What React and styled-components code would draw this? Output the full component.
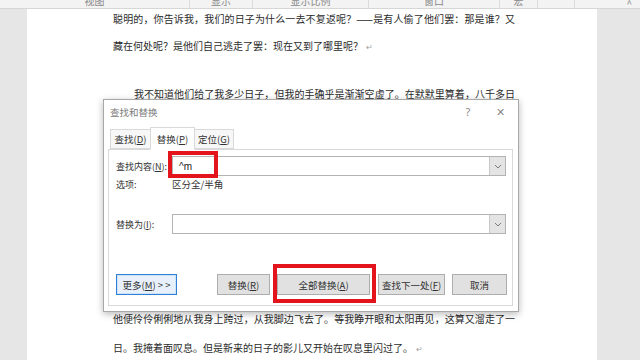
import styled, { createGlobalStyle } from "styled-components";

const GlobalStyle = createGlobalStyle`
  html, body {
    margin: 0;
    padding: 0;
    background: #e6e6e6;
  }
  body {
    font-family: "Noto Sans CJK SC", "Noto Sans", sans-serif;
  }
`;

const Screen = styled.div`
  width: 640px;
  height: 360px;
  overflow: hidden;
  display: flex;
  flex-direction: column;
  background: #e6e6e6;
`;

const Ribbon = styled.div`
  height: 8px;
  flex-shrink: 0;
  display: flex;
  overflow: hidden;
  background: #f3f3f3;
  border-bottom: 1px solid #d6d6d6;
`;

const RibbonCell = styled.div`
  width: ${(p) => p.w}px;
  flex-shrink: 0;
  display: flex;
  justify-content: ${(p) => (p.right ? "flex-end" : "center")};
  padding-right: ${(p) => (p.right ? "8px" : "0")};
  box-sizing: border-box;
  border-right: ${(p) => (p.last ? "none" : "1px solid #dcdcdc")};
  font-size: 10px;
  line-height: 10px;
  color: #8a8a8a;
  margin-top: -4px;
`;

const Workspace = styled.div`
  flex: 1;
  display: flex;
`;

const Page = styled.div`
  position: relative;
  margin-left: 27px;
  width: 570px;
  background: #fff;
  padding: 3px 0 0 86px;
  box-sizing: border-box;
`;

const Line = styled.p`
  margin: ${(p) => p.gap || 0}px 0 0 ${(p) => p.indent || 0}px;
  width: ${(p) => (p.full ? `${402 - (p.indent || 0)}px` : "auto")};
  font-size: 10px;
  line-height: 14px;
  color: #2b2b2b;
  white-space: nowrap;
  text-align: left;
  text-align-last: ${(p) => (p.full ? "justify" : "auto")};
`;

const Mark = styled.span`
  color: #a0a0a0;
  font-size: 8px;
  margin-left: 3px;
`;

const Dialog = styled.div`
  position: absolute;
  left: 76px;
  top: 90px;
  width: 416px;
  height: 213px;
  box-sizing: border-box;
  background: #fff;
  border: 1px solid #a8a8a8;
  box-shadow: 0 2px 7px rgba(0, 0, 0, 0.28);
  display: flex;
  flex-direction: column;
  z-index: 2;
  font-size: 9.5px;
  color: #333;
`;

const TitleBar = styled.div`
  height: 23px;
  display: flex;
  align-items: center;
  padding: 0 1px 0 6px;
`;

const Title = styled.div`
  flex: 1;
  font-size: 9.5px;
  color: #7a7a7a;
`;

const TitleButton = styled.div`
  width: ${(p) => p.w}px;
  height: 23px;
  display: flex;
  align-items: center;
  justify-content: center;
  font-size: 11px;
  color: #8a8a8a;
  font-family: "Noto Sans", sans-serif;
`;

const TabsRow = styled.div`
  display: flex;
  align-items: flex-end;
  height: 22px;
  padding-left: 6px;
  margin-top: 4px;
  position: relative;
  z-index: 1;
`;

const Tab = styled.div`
  width: ${(p) => p.w}px;
  height: ${(p) => (p.active ? 23 : 20)}px;
  box-sizing: border-box;
  display: flex;
  align-items: center;
  justify-content: center;
  color: #333;
  background: ${(p) => (p.active ? "#fff" : "#f7f7f7")};
  border: 1px solid #d9d9d9;
  border-bottom: ${(p) => (p.active ? "1px solid #fff" : "1px solid #d9d9d9")};
  margin-bottom: ${(p) => (p.active ? "-1px" : "0")};
  margin-left: ${(p) => (p.active ? "-1px" : "0")};
  margin-right: ${(p) => (p.active ? "-1px" : "0")};
`;

const Panel = styled.div`
  flex: 1;
  margin: 0 5px 5px 4px;
  border: 1px solid #d9d9d9;
  padding: 6px 5px 0 7px;
  display: flex;
  flex-direction: column;
`;

const FieldRow = styled.div`
  display: flex;
  align-items: center;
  height: ${(p) => p.h || 20}px;
  margin-top: ${(p) => p.gap || 0}px;
`;

const Label = styled.div`
  width: 56px;
  flex-shrink: 0;
  font-size: 9px;
  white-space: nowrap;
`;

const ComboBox = styled.div`
  position: relative;
  flex: 1;
  height: 20px;
  margin-right: 1px;
  box-sizing: border-box;
  border: 1px solid #b3b3b3;
  display: flex;
  align-items: center;
  background: #fff;
`;

const ComboText = styled.div`
  flex: 1;
  padding-left: 6px;
  font-size: 10px;
  font-family: "Liberation Sans", sans-serif;
  color: #222;
`;

const DropButton = styled.div`
  width: 15px;
  height: 100%;
  background: #e4e4e4;
  border-left: 1px solid #c8c8c8;
  display: flex;
  align-items: center;
  justify-content: center;
`;

const Highlight = styled.div`
  position: absolute;
  left: ${(p) => p.x}px;
  top: ${(p) => p.y}px;
  width: ${(p) => p.w}px;
  height: ${(p) => p.h}px;
  box-sizing: border-box;
  border: 4px solid #e3141b;
  pointer-events: none;
`;

const ButtonRow = styled.div`
  display: flex;
  height: 21px;
  margin-top: 40px;
`;

const ButtonGroup = styled.div`
  display: flex;
  gap: ${(p) => p.gap}px;
  margin-left: auto;
`;

const Button = styled.div`
  position: relative;
  width: ${(p) => p.w}px;
  height: 21px;
  box-sizing: border-box;
  margin-left: ${(p) => p.ml || 0}px;
  display: flex;
  align-items: center;
  justify-content: center;
  white-space: nowrap;
  background: ${(p) => (p.primary ? "#e8f1fb" : "#e1e1e1")};
  border: 1px solid ${(p) => (p.primary ? "#2f7fd6" : "#adadad")};
  box-shadow: ${(p) => (p.primary ? "inset 0 0 0 1px #cfe3f7" : "none")};
`;

function Chevron() {
  return (
    <svg width="8" height="5" viewBox="0 0 8 5">
      <path d="M1 1 L4 4 L7 1" fill="none" stroke="#7a7a7a" strokeWidth="1" />
    </svg>
  );
}

const ribbon = [
  { w: 190, label: "视图" },
  { w: 63, label: "显示" },
  { w: 116, label: "显示比例" },
  { w: 131, label: "窗口" },
  { w: 38, label: "宏" },
  { w: 37, label: "" },
];

export default function App() {
  return (
    <Screen>
      <GlobalStyle />
      <Ribbon>
        {ribbon.map((c, i) => (
          <RibbonCell key={i} w={c.w}>
            {c.label}
          </RibbonCell>
        ))}
        <RibbonCell w={65} right last>
          <span style={{ marginTop: 3 }}>^</span>
        </RibbonCell>
      </Ribbon>
      <Workspace>
        <Page>
          <Line full>
            聪明的，你告诉我，我们的日子为什么一去不复返呢？——是有人偷了他们罢：那是谁？又
          </Line>
          <Line gap={13}>
            藏在何处呢？是他们自己逃走了罢：现在又到了哪里呢？<Mark>↵</Mark>
          </Line>
          <Line gap={33} indent={21} full>
            我不知道他们给了我多少日子，但我的手确乎是渐渐空虚了。在默默里算着，八千多日
          </Line>
          <Line gap={211} full>
            他便伶伶俐俐地从我身上跨过，从我脚边飞去了。等我睁开眼和太阳再见，这算又溜走了一
          </Line>
          <Line gap={15}>
            日。我掩着面叹息。但是新来的日子的影儿又开始在叹息里闪过了。<Mark>↵</Mark>
          </Line>

          <Dialog>
            <TitleBar>
              <Title>查找和替换</Title>
              <TitleButton w={30}>?</TitleButton>
              <TitleButton w={34}>✕</TitleButton>
            </TitleBar>
            <TabsRow>
              <Tab w={41}>
                查找(<u>D</u>)
              </Tab>
              <Tab w={45} active>
                替换(<u>P</u>)
              </Tab>
              <Tab w={40}>
                定位(<u>G</u>)
              </Tab>
            </TabsRow>
            <Panel>
              <FieldRow>
                <Label>
                  查找内容(<u>N</u>):
                </Label>
                <ComboBox>
                  <ComboText>^m</ComboText>
                  <DropButton>
                    <Chevron />
                  </DropButton>
                  <Highlight x={-5} y={-6} w={50} h={27} />
                </ComboBox>
              </FieldRow>
              <FieldRow h={16}>
                <Label>选项:</Label>
                <div>区分全/半角</div>
              </FieldRow>
              <FieldRow gap={22}>
                <Label>
                  替换为(<u>I</u>):
                </Label>
                <ComboBox>
                  <ComboText />
                  <DropButton>
                    <Chevron />
                  </DropButton>
                </ComboBox>
              </FieldRow>
              <ButtonRow>
                <Button w={61} primary>
                  更多(<u>M</u>)&nbsp;&gt;&nbsp;&gt;
                </Button>
                <ButtonGroup gap={7}>
                  <Button w={53}>
                    替换(<u>R</u>)
                  </Button>
                  <Button w={93}>
                    全部替换(<u>A</u>)
                    <Highlight x={-5} y={-11} w={103} h={39} />
                  </Button>
                  <Button w={67} ml={1}>
                    查找下一处(<u>F</u>)
                  </Button>
                  <Button w={55}>取消</Button>
                </ButtonGroup>
              </ButtonRow>
            </Panel>
          </Dialog>
        </Page>
      </Workspace>
    </Screen>
  );
}
